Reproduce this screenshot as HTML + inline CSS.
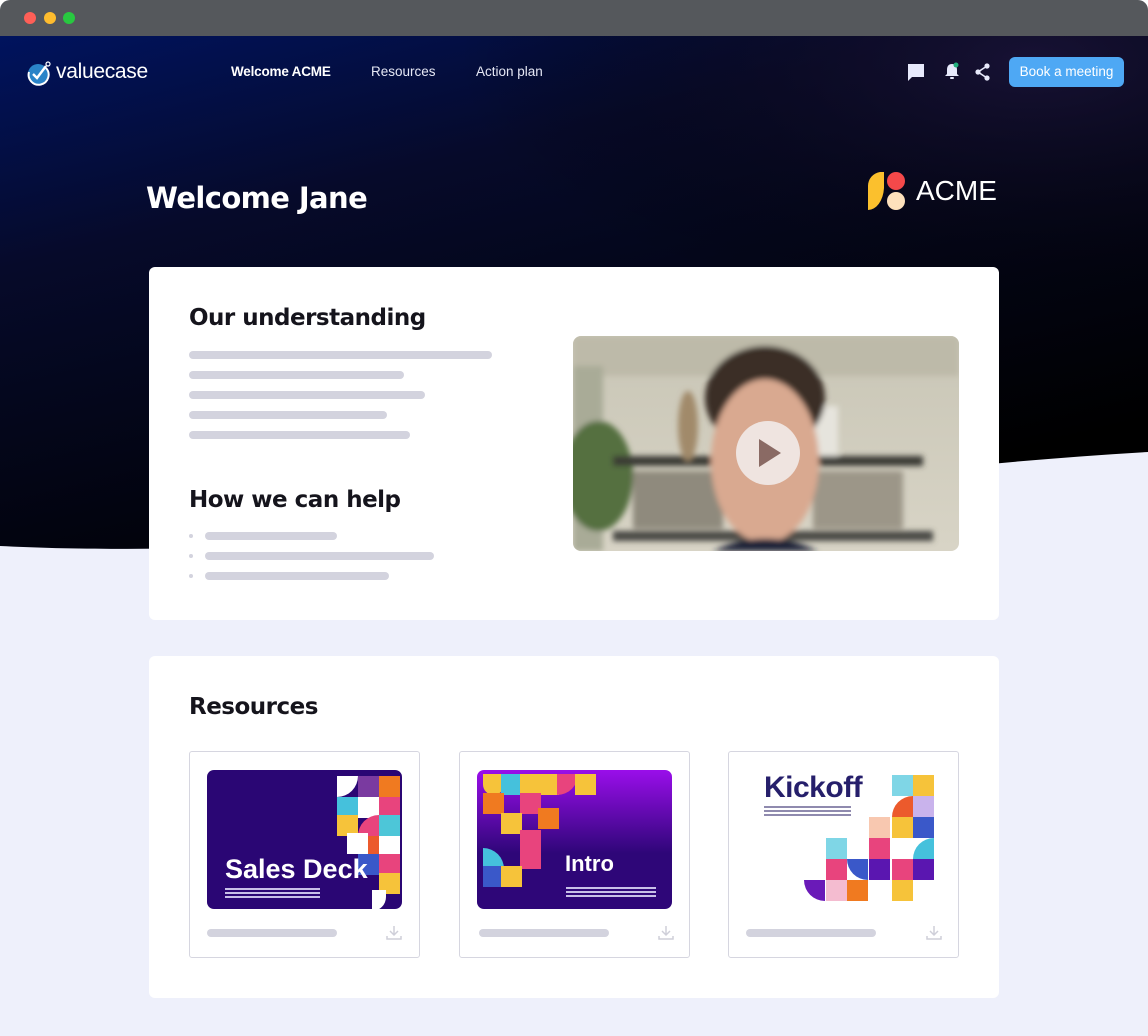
<!DOCTYPE html>
<html><head><meta charset="utf-8"><style>
*{margin:0;padding:0;box-sizing:border-box}
body{width:1148px;height:1036px;overflow:hidden;background:#fff;font-family:"Liberation Sans",sans-serif;position:relative}
.frame{position:absolute;left:0;top:0;width:1148px;height:1036px;border-radius:10px 10px 0 0;overflow:hidden;background:#eef0fb}
.bar{position:absolute;left:0;top:0;width:1148px;height:36px;background:#55585c}
.dot{position:absolute;top:12px;width:12px;height:12px;border-radius:50%}
.hero{position:absolute;left:0;top:36px;width:1148px;height:520px}
.abs{position:absolute}
.nav{color:#e6e8f5;font-size:13.5px;top:64px}
.card{position:absolute;background:#fff;border-radius:6px}
h2{position:absolute;font-family:"DejaVu Sans","Liberation Sans",sans-serif;font-weight:bold;font-size:23px;color:#15141c;letter-spacing:-0.5px}
.ln{position:absolute;height:8px;border-radius:4px;background:#d3d3de}
.bl{position:absolute;width:4px;height:4px;border-radius:50%;background:#d3d3de}
.rc{position:absolute;top:751px;width:231px;height:207px;border:1px solid #d6d6e0;border-radius:3px;background:#fff}
.th{position:absolute;left:17px;top:18px;width:195px;height:139px;border-radius:7px;overflow:hidden}
.sq{position:absolute;width:21px;height:21px}
</style></head><body>
<div class="frame">
<div class="hero">
<svg width="1148" height="520" style="position:absolute;left:0;top:0">
<defs><linearGradient id="g" x1="0" y1="0" x2="0.55" y2="1"><stop offset="0" stop-color="#00135e"/><stop offset="0.35" stop-color="#060a2a"/><stop offset="1" stop-color="#000"/></linearGradient>
<radialGradient id="r" cx="0.9" cy="0.05" r="0.5"><stop offset="0" stop-color="#1c1438" stop-opacity="0.8"/><stop offset="1" stop-color="#000" stop-opacity="0"/></radialGradient></defs>
<path d="M0,0 H1148 V416 C900,430 650,470 300,505 C200,515 80,514 0,510 Z" fill="url(#g)"/>
<path d="M0,0 H1148 V416 C900,430 650,470 300,505 C200,515 80,514 0,510 Z" fill="url(#r)"/>
</svg>
</div>
<div class="bar"></div>
<div class="dot" style="left:24px;background:#fe5f57"></div>
<div class="dot" style="left:44px;background:#febc2e"></div>
<div class="dot" style="left:63px;background:#28c840"></div>

<svg class="abs" style="left:27px;top:60px" width="26" height="26" viewBox="0 0 26 26"><circle cx="11" cy="14" r="10" fill="#2a84c8"/><path d="M2,12 a10,10 0 1,0 17,-4" fill="none" stroke="#fff" stroke-width="2"/><path d="M6,14 l4,4 l9,-12" fill="none" stroke="#fff" stroke-width="2.4"/><circle cx="21" cy="4" r="2" fill="none" stroke="#fff" stroke-width="1.2"/></svg>
<div class="abs" style="left:56px;top:60px;color:#fff;font-size:21px;letter-spacing:-0.3px">valuecase</div>
<div class="abs nav" style="left:231px;font-weight:bold;color:#fff;letter-spacing:-0.2px">Welcome ACME</div>
<div class="abs nav" style="left:371px">Resources</div>
<div class="abs nav" style="left:476px">Action plan</div>

<svg class="abs" style="left:906px;top:62px" width="20" height="20" viewBox="0 0 20 20"><path d="M2,2 H18 V15 H6 L2,19 Z" fill="#e7e9fb"/></svg>
<svg class="abs" style="left:942px;top:61px" width="20" height="20" viewBox="0 0 20 20"><path d="M10,3 C6,3 5,6 5,9 V13 L3,15 H17 L15,13 V9 C15,6 14,3 10,3 Z" fill="#e7e9fb"/><rect x="8" y="16" width="4" height="2" rx="1" fill="#e7e9fb"/><circle cx="14" cy="4" r="2.5" fill="#22b07d"/></svg>
<svg class="abs" style="left:975px;top:63px" width="16" height="18" viewBox="0 0 16 18"><circle cx="12" cy="3" r="2.6" fill="#e7e9fb"/><circle cx="3" cy="9" r="2.6" fill="#e7e9fb"/><circle cx="12" cy="15" r="2.6" fill="#e7e9fb"/><path d="M12,3 L3,9 L12,15" stroke="#e7e9fb" stroke-width="1.6" fill="none"/></svg>
<div class="abs" style="left:1009px;top:57px;width:115px;height:30px;background:#4ea8f4;border-radius:6px;color:#fff;font-size:13.5px;text-align:center;line-height:30px">Book a meeting</div>

<div class="abs" style="left:146px;top:181px;color:#fff;font-family:'DejaVu Sans',sans-serif;font-weight:bold;font-size:29px;letter-spacing:-0.6px">Welcome Jane</div>
<svg class="abs" style="left:868px;top:172px" width="40" height="40" viewBox="0 0 40 40"><path d="M12,0 H16 V16 A16,24 0 0 1 0,38 V14 A14,14 0 0 1 12,0 Z" fill="#fbc02d"/><circle cx="28" cy="9" r="9" fill="#f4494a"/><circle cx="28" cy="29" r="9" fill="#fde1bc"/></svg>
<div class="abs" style="left:916px;top:175px;color:#fff;font-size:28px;letter-spacing:0px">ACME</div>

<div class="card" style="left:149px;top:267px;width:850px;height:353px"></div>
<h2 style="left:189px;top:305px">Our understanding</h2>
<div class="ln" style="left:189px;top:351px;width:303px"></div>
<div class="ln" style="left:189px;top:371px;width:215px"></div>
<div class="ln" style="left:189px;top:391px;width:236px"></div>
<div class="ln" style="left:189px;top:411px;width:198px"></div>
<div class="ln" style="left:189px;top:431px;width:221px"></div>
<h2 style="left:189px;top:487px">How we can help</h2>
<div class="bl" style="left:189px;top:534px"></div><div class="ln" style="left:205px;top:532px;width:132px"></div>
<div class="bl" style="left:189px;top:554px"></div><div class="ln" style="left:205px;top:552px;width:229px"></div>
<div class="bl" style="left:189px;top:574px"></div><div class="ln" style="left:205px;top:572px;width:184px"></div>

<svg class="abs" style="left:573px;top:336px;border-radius:8px" width="386" height="215" viewBox="0 0 386 215">
<defs><filter id="b"><feGaussianBlur stdDeviation="3"/></filter><linearGradient id="wall" x1="0" y1="0" x2="0" y2="1"><stop offset="0" stop-color="#c9c6b6"/><stop offset="1" stop-color="#d8d4c6"/></linearGradient></defs>
<rect width="386" height="215" fill="url(#wall)"/>
<g filter="url(#b)">
<rect x="0" y="0" width="386" height="40" fill="#bdbaa9"/>
<rect x="0" y="30" width="30" height="185" fill="#a9ab97"/>
<ellipse cx="25" cy="140" rx="35" ry="55" fill="#55703f"/>
<rect x="40" y="120" width="310" height="10" fill="#3b3a36"/>
<rect x="40" y="195" width="320" height="10" fill="#4a4a45"/>
<rect x="60" y="135" width="90" height="58" fill="#8f8a7d"/>
<rect x="240" y="135" width="90" height="58" fill="#9c9688"/>
<ellipse cx="115" cy="90" rx="10" ry="35" fill="#a18a6a"/>
<rect x="225" y="70" width="40" height="50" fill="#e6e4dd"/>
<ellipse cx="192" cy="62" rx="60" ry="52" fill="#3a2e26"/>
<ellipse cx="192" cy="125" rx="54" ry="82" fill="#d9a990"/>
<path d="M140,215 Q192,190 245,215 Z" fill="#1d2338"/>
</g>
<circle cx="195" cy="117" r="32" fill="#f2eeee" opacity="0.85"/>
<path d="M186,103 L208,117 L186,131 Z" fill="#8a6a64"/>
</svg>

<div class="card" style="left:149px;top:656px;width:850px;height:342px"></div>
<h2 style="left:189px;top:694px">Resources</h2>

<div class="rc" style="left:189px">
<div class="th" style="background:#2a0674">
<div class="sq" style="left:130px;top:6px;background:#fff;border-radius:0 0 21px 0"></div>
<div class="sq" style="left:151px;top:6px;background:#7a3aa0"></div>
<div class="sq" style="left:172px;top:6px;background:#f07a20"></div>
<div class="sq" style="left:151px;top:27px;background:#fff"></div>
<div class="sq" style="left:172px;top:27px;background:#e8447d"></div>
<div class="sq" style="left:130px;top:27px;background:#45c1dc"></div>
<div class="sq" style="left:130px;top:45px;background:#f6c33a"></div>
<div class="sq" style="left:151px;top:45px;background:#e8447d;border-radius:21px 0 0 0"></div>
<div class="sq" style="left:172px;top:45px;background:#4dc6d8"></div>
<div class="sq" style="left:140px;top:63px;background:#fff"></div>
<div class="sq" style="left:161px;top:66px;background:#ec5a2c"></div>
<div class="sq" style="left:172px;top:66px;background:#fff"></div>
<div class="sq" style="left:151px;top:84px;background:#3a58c9"></div>
<div class="sq" style="left:172px;top:84px;background:#e8447d"></div>
<div class="sq" style="left:172px;top:103px;background:#f6c33a"></div>
<div class="sq" style="left:165px;top:120px;background:#fff;border-radius:0 0 21px 0;width:14px"></div>
<div style="position:absolute;left:18px;top:84px;color:#fff;font-weight:bold;font-size:27px">Sales Deck</div>
<div style="position:absolute;left:18px;top:118px;width:95px;height:2px;background:#c8c0e8;box-shadow:0 4px #c8c0e8,0 8px #c8c0e8"></div>
</div>
<div class="ln" style="left:17px;top:177px;width:130px"></div>
<svg style="position:absolute;left:196px;top:173px" width="16" height="16" viewBox="0 0 16 16" fill="none" stroke="#cfcfd9" stroke-width="1.5"><path d="M8,1 V10 M4,6 L8,10 L12,6 M1,11 V14 H15 V11"/></svg>
</div>

<div class="rc" style="left:459px">
<div class="th" style="background:linear-gradient(#9a0eea,#2e0678 60%)">
<div class="sq" style="left:6px;top:4px;background:#f6c33a;border-radius:0 0 21px 21px"></div>
<div class="sq" style="left:24px;top:4px;background:#45c1dc"></div>
<div class="sq" style="left:43px;top:4px;background:#f6c33a"></div>
<div class="sq" style="left:61px;top:4px;background:#f6c33a"></div>
<div class="sq" style="left:80px;top:4px;background:#e8447d;border-radius:0 0 21px 0"></div>
<div class="sq" style="left:98px;top:4px;background:#f6c33a"></div>
<div class="sq" style="left:6px;top:23px;background:#f07a20"></div>
<div class="sq" style="left:43px;top:23px;background:#e8447d"></div>
<div class="sq" style="left:24px;top:43px;background:#f6c33a"></div>
<div class="sq" style="left:61px;top:38px;background:#f07a20"></div>
<div class="sq" style="left:43px;top:60px;background:#e8447d"></div>
<div class="sq" style="left:6px;top:78px;background:#45c1dc;border-radius:0 21px 0 0"></div>
<div class="sq" style="left:43px;top:78px;background:#e8447d"></div>
<div class="sq" style="left:6px;top:96px;background:#3a58c9"></div>
<div class="sq" style="left:24px;top:96px;background:#f6c33a"></div>
<div style="position:absolute;left:88px;top:81px;color:#fff;font-weight:bold;font-size:22px">Intro</div>
<div style="position:absolute;left:89px;top:117px;width:90px;height:2px;background:#c8c0e8;box-shadow:0 4px #c8c0e8,0 8px #c8c0e8"></div>
</div>
<div class="ln" style="left:19px;top:177px;width:130px"></div>
<svg style="position:absolute;left:198px;top:173px" width="16" height="16" viewBox="0 0 16 16" fill="none" stroke="#cfcfd9" stroke-width="1.5"><path d="M8,1 V10 M4,6 L8,10 L12,6 M1,11 V14 H15 V11"/></svg>
</div>

<div class="rc" style="left:728px">
<div style="position:absolute;left:35px;top:19px;color:#261f6b;font-weight:bold;font-size:30px;letter-spacing:-0.5px">Kickoff</div>
<div style="position:absolute;left:35px;top:54px;width:87px;height:2px;background:#8f8aae;box-shadow:0 4px #8f8aae,0 8px #8f8aae"></div>
<div class="sq" style="left:163px;top:23px;background:#7fd6e6"></div>
<div class="sq" style="left:184px;top:23px;background:#f6c33a"></div>
<div class="sq" style="left:163px;top:44px;background:#ec5a2c;border-radius:21px 0 0 0"></div>
<div class="sq" style="left:184px;top:44px;background:#c9b3ec"></div>
<div class="sq" style="left:140px;top:65px;background:#f8c8b0"></div>
<div class="sq" style="left:163px;top:65px;background:#f6c33a"></div>
<div class="sq" style="left:184px;top:65px;background:#3a58c9"></div>
<div class="sq" style="left:97px;top:86px;background:#7fd6e6"></div>
<div class="sq" style="left:140px;top:86px;background:#e8447d"></div>
<div class="sq" style="left:184px;top:86px;background:#45c1dc;border-radius:21px 0 0 0"></div>
<div class="sq" style="left:97px;top:107px;background:#e8447d"></div>
<div class="sq" style="left:118px;top:107px;background:#3a58c9;border-radius:0 0 0 21px"></div>
<div class="sq" style="left:140px;top:107px;background:#5a16b0"></div>
<div class="sq" style="left:163px;top:107px;background:#e8447d"></div>
<div class="sq" style="left:184px;top:107px;background:#5a16b0"></div>
<div class="sq" style="left:75px;top:128px;background:#6a1ab8;border-radius:0 0 0 21px"></div>
<div class="sq" style="left:97px;top:128px;background:#f4bcd0"></div>
<div class="sq" style="left:118px;top:128px;background:#f07a20"></div>
<div class="sq" style="left:163px;top:128px;background:#f6c33a"></div>
<div class="ln" style="left:17px;top:177px;width:130px"></div>
<svg style="position:absolute;left:197px;top:173px" width="16" height="16" viewBox="0 0 16 16" fill="none" stroke="#cfcfd9" stroke-width="1.5"><path d="M8,1 V10 M4,6 L8,10 L12,6 M1,11 V14 H15 V11"/></svg>
</div>
</div>
</body></html>
